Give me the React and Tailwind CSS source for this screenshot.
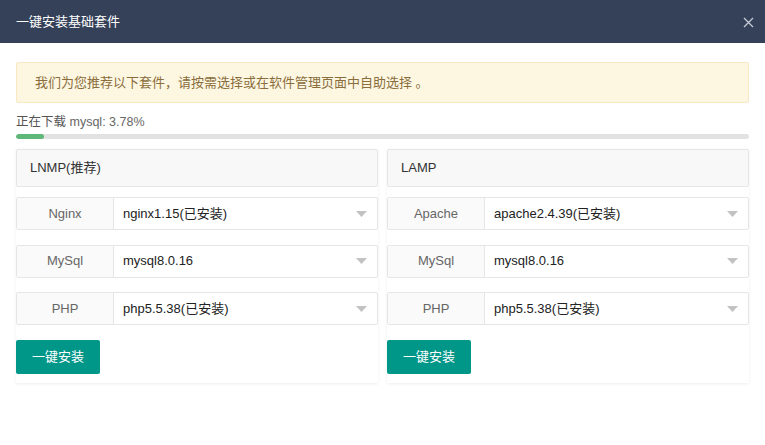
import React from "react";

const font = { fontFamily: '"Liberation Sans", "Noto Sans CJK SC", sans-serif' };

function Row({ label, value }) {
  return (
    <div className="flex h-[33px] border border-[#e6e6e6] rounded-[2px] bg-white">
      <div className="w-[97px] shrink-0 flex items-center justify-center bg-[#fafafa] border-r border-[#e6e6e6] text-[13px] text-[#666]">
        {label}
      </div>
      <div className="flex-1 flex items-center justify-between pl-[9px] pr-[10px] text-[13px] text-[#222]">
        <span>{value}</span>
        <svg width="11" height="6" viewBox="0 0 11 6" className="block">
          <path d="M0 0 L11 0 L5.5 6 Z" fill="#c2c2c2" />
        </svg>
      </div>
    </div>
  );
}

function Card({ title, rows }) {
  return (
    <div className="flex-1 bg-white shadow-[0_1px_3px_rgba(0,0,0,0.07)] pb-[9px]">
      <div className="h-[38px] flex items-center px-[13px] bg-[#f8f8f8] border border-[#e6e6e6] rounded-[2px] text-[13px] text-[#333]">
        {title}
      </div>
      <div className="mt-[10px] flex flex-col gap-[14.5px]">
        {rows.map((r) => (
          <Row key={r[0]} label={r[0]} value={r[1]} />
        ))}
      </div>
      <button className="mt-[15px] w-[84px] h-[34px] bg-[#009688] text-white text-[13px] rounded-[2px] flex items-center justify-center">
        一键安装
      </button>
    </div>
  );
}

export default function App() {
  return (
    <div className="w-[765px] h-[445px] bg-white" style={font}>
      <div className="h-[43px] bg-[#354158] flex items-center justify-between pl-[16px] pr-[11px]">
        <span className="text-white text-[13px]">一键安装基础套件</span>
        <svg width="11" height="11" viewBox="0 0 11 11" className="block mt-[1px]">
          <path d="M1 1 L10 10 M10 1 L1 10" stroke="#c5cbd6" strokeWidth="1.3" />
        </svg>
      </div>
      <div className="px-[16px]">
        <div className="mt-[19px] h-[41px] flex items-center pl-[18px] bg-[#fdf7e2] border border-[#f8e8c4] rounded-[2px] text-[13px] text-[#8a6d3b]">
          我们为您推荐以下套件，请按需选择或在软件管理页面中自助选择 。
        </div>
        <div className="mt-[11px] text-[12.5px] text-[#555] leading-[16px]">
          正在下载 <span className="text-[12.5px] text-[#666]">mysql: 3.78%</span>
        </div>
        <div className="mt-[4px] h-[5px] bg-[#e2e2e2] rounded-full overflow-hidden">
          <div className="h-full w-[28px] bg-[#5fb878] rounded-full" />
        </div>
        <div className="mt-[10px] flex gap-[9px]">
          <Card
            title="LNMP(推荐)"
            rows={[
              ["Nginx", "nginx1.15(已安装)"],
              ["MySql", "mysql8.0.16"],
              ["PHP", "php5.5.38(已安装)"],
            ]}
          />
          <Card
            title="LAMP"
            rows={[
              ["Apache", "apache2.4.39(已安装)"],
              ["MySql", "mysql8.0.16"],
              ["PHP", "php5.5.38(已安装)"],
            ]}
          />
        </div>
      </div>
    </div>
  );
}
